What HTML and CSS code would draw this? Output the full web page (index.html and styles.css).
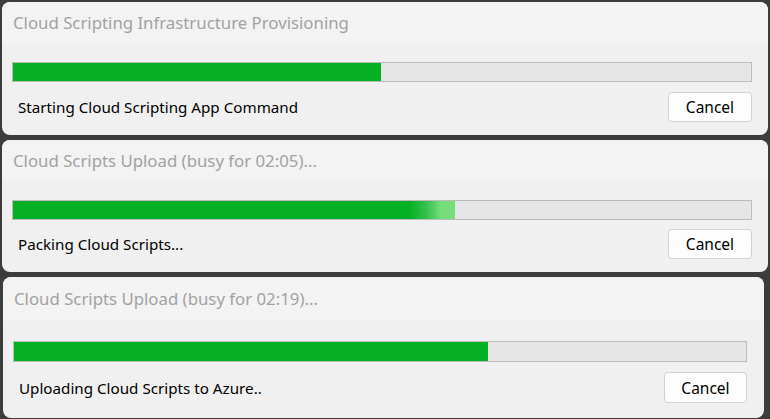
FILE: index.html
```html
<!DOCTYPE html>
<html>
<head>
<meta charset="utf-8">
<link rel="stylesheet" href="styles.css">
</head>
<body>
<div class="stack">
  <section class="panel panel-a">
    <header class="title">Cloud Scripting Infrastructure Provisioning</header>
    <div class="body">
      <div class="bar"><div class="fill" style="width:49.9%"></div></div>
      <div class="row">
        <span class="status">Starting Cloud Scripting App Command</span>
        <button class="btn">Cancel</button>
      </div>
    </div>
  </section>
  <section class="panel panel-b">
    <header class="title">Cloud Scripts Upload (busy for 02:05)...</header>
    <div class="body">
      <div class="bar"><div class="fill fill-shine" style="width:59.9%"></div></div>
      <div class="row">
        <span class="status">Packing Cloud Scripts...</span>
        <button class="btn">Cancel</button>
      </div>
    </div>
  </section>
  <section class="panel panel-c">
    <header class="title">Cloud Scripts Upload (busy for 02:19)...</header>
    <div class="body">
      <div class="bar"><div class="fill" style="width:64.8%"></div></div>
      <div class="row">
        <span class="status">Uploading Cloud Scripts to Azure..</span>
        <button class="btn">Cancel</button>
      </div>
    </div>
  </section>
</div>
</body>
</html>
```
FILE: styles.css
```css
html, body {
  margin: 0;
  padding: 0;
  background: #3c3c3c;
  width: 770px;
  height: 419px;
  overflow: hidden;
  font-family: "Noto Sans", "Open Sans", sans-serif;
}
.stack {
  display: flex;
  flex-direction: column;
  padding-top: 2px;
  gap: 5px;
}
.panel {
  background: #f0f0f0;
  border-radius: 8px;
  overflow: hidden;
  box-sizing: border-box;
}
.panel-a { margin-left: 2px; width: 766px; height: 133px; }
.panel-b { margin-left: 2px; width: 766px; height: 132px; }
.panel-c { margin-left: 3px; width: 761px; height: 141px; }
.title {
  height: 42px;
  line-height: 42px;
  background: #f3f3f3;
  padding-left: 11px;
  font-size: 16.8px;
  color: #a2a2a2;
  white-space: nowrap;
}
.panel-c .title { height: 44px; line-height: 44px; }
.body {
  padding: 18px 16px 0 10px;
}
.panel-c .body { padding: 20px 17px 0 10px; }
.bar {
  height: 20px;
  box-sizing: border-box;
  border: 1px solid #bcbcbc;
  background: #e6e6e6;
  display: flex;
}
.panel-c .bar { height: 21px; }
.fill {
  height: 100%;
  background: #06b025;
}
.fill-shine {
  background: linear-gradient(to right, #06b025 0, #06b025 calc(100% - 45px), #36c24f calc(100% - 28px), #74de7a calc(100% - 14px), #74de7a 100%);
}
.row {
  display: flex;
  justify-content: space-between;
  align-items: center;
  margin-top: 10px;
  padding-left: 6px;
}
.panel-b .row { margin-top: 9px; }
.status {
  font-size: 15.2px;
  color: #000;
}
.btn {
  width: 84px;
  height: 30px;
  background: #fdfdfd;
  border: 1px solid #d2d2d2;
  border-radius: 4px;
  font-family: inherit;
  font-size: 15.5px;
  color: #000;
  padding: 0;
}
.panel-c .btn { width: 83px; height: 31px; }
```
